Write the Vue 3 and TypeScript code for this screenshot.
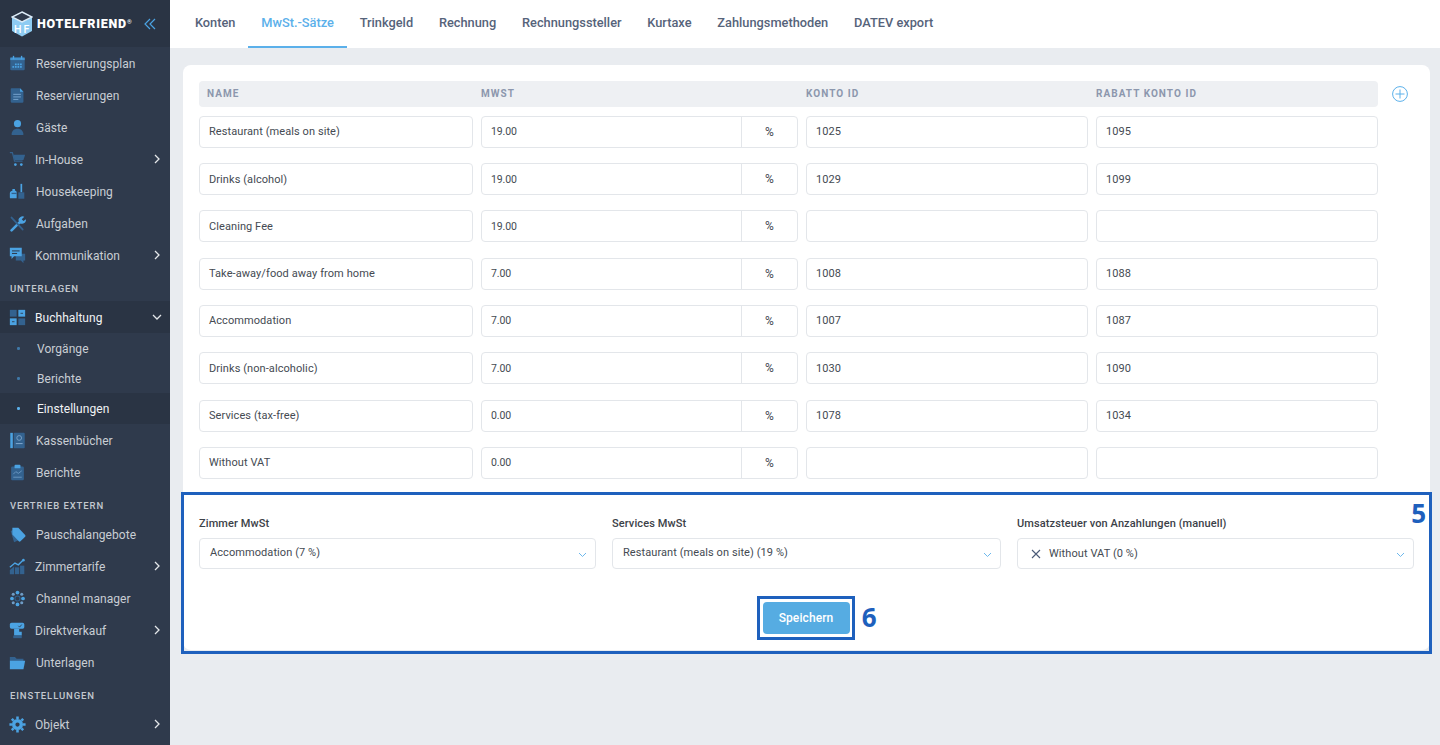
<script setup lang="ts">
interface NavEntry {
  kind: 'item' | 'label' | 'sub'
  text: string
  icon?: string
  arrow?: boolean
  open?: boolean
  active?: boolean
}

const L = '#4ba3e3'
const D = '#33628f'

const icons: Record<string, string> = {
  calendar: `<rect x="1.5" y="3" width="17" height="15" rx="1.5" fill="${D}"/><rect x="1.5" y="3" width="17" height="3" fill="${L}" opacity=".75"/><rect x="4.5" y="1" width="1.6" height="4" fill="${L}"/><rect x="14" y="1" width="1.6" height="4" fill="${L}"/><g fill="${L}"><rect x="4" y="13" width="2" height="2"/><rect x="7" y="13" width="2" height="2"/><rect x="10" y="10" width="2" height="2"/><rect x="13" y="10" width="2" height="2"/><rect x="10" y="13" width="2" height="2"/><rect x="13" y="13" width="2" height="2"/><rect x="7" y="10" width="2" height="2"/></g>`,
  doc: `<path d="M3 1.5h10l4 4V17a1.5 1.5 0 0 1-1.5 1.5h-12A1.5 1.5 0 0 1 2 17V2.5a1 1 0 0 1 1-1z" fill="${D}"/><path d="M13 1.5l4 4h-4z" fill="${L}"/><g fill="#6f9cc6"><rect x="5" y="8" width="9" height="1.3"/><rect x="5" y="11" width="9" height="1.3"/><rect x="5" y="14" width="6" height="1.3"/></g>`,
  person: `<circle cx="10" cy="5.5" r="4.2" fill="${L}"/><path d="M3 18.5c0-4.5 3-7 7-7s7 2.5 7 7c0 .5-14 .5-14 0z" fill="${D}"/>`,
  cart: `<path d="M1 2h3l2.5 10h9.500" fill="none" stroke="${D}" stroke-width="1.4"/><path d="M5 4.5h14l-2 6H6.5z" fill="${D}"/><circle cx="7.5" cy="16" r="1.6" fill="${L}"/><circle cx="14.5" cy="16" r="1.6" fill="${L}"/>`,
  broom: `<path d="M1 12c0-1.500 1.500-3 3-3V7h3v2c1 0 2 .5 2 2v7H2a1 1 0 0 1-1-1z" fill="${L}"/><rect x="3" y="11.500" width="6" height="1.500" fill="${D}"/><rect x="13.500" y="1" width="2" height="10" fill="${L}"/><path d="M11 11h7v7.500h-7z" fill="${D}"/>`,
  tools: `<path d="M3 18l10-10" stroke="${L}" stroke-width="3" stroke-linecap="round"/><path d="M11 6a5 5 0 0 1 7-4l-3 3 2 2 3-2a5 5 0 0 1-7 5z" fill="${L}"/><path d="M3 3l13 14" stroke="${D}" stroke-width="2.2" stroke-linecap="round"/>`,
  chat: `<path d="M8 8h11v8h-2v3l-3-3H8z" fill="${D}"/><path d="M1 1h14v10H6l-3 3v-3H1z" fill="${L}"/><g fill="#2f3a4c"><rect x="3.5" y="4" width="9" height="1.2"/><rect x="3.5" y="7" width="6" height="1.2"/></g>`,
  calc: `<rect x="1" y="1" width="8" height="8" fill="${D}"/><rect x="11" y="1" width="8" height="8" fill="${L}"/><rect x="1" y="11" width="8" height="8" fill="${L}"/><rect x="11" y="11" width="8" height="8" fill="${D}"/><g fill="#2f3a4c"><rect x="13.500" y="4.500" width="3" height="1"/><rect x="3.500" y="14.500" width="3" height="1"/></g>`,
  book: `<rect x="1.5" y="1" width="3" height="18" fill="${L}"/><rect x="5.5" y="1" width="13" height="18" rx="1" fill="${D}"/><circle cx="12" cy="7" r="2.8" fill="none" stroke="#7fa6cc" stroke-width="1"/><rect x="8" y="13" width="8" height="1.2" fill="#7fa6cc"/>`,
  clipboard: `<rect x="2.5" y="3" width="15" height="16" rx="1.5" fill="${D}"/><rect x="6.5" y="1" width="7" height="4" rx="1" fill="${L}"/><path d="M5 12l3-3 3 2 4-3" fill="none" stroke="#6f9cc6" stroke-width="1"/><rect x="5" y="15" width="10" height="1" fill="#6f9cc6"/>`,
  tag: `<path d="M2 6l6-3 5 13-7 3z" fill="${D}"/><path d="M4 2h7l8 8.500a1.500 1.500 0 0 1 0 2L13.500 18a1.500 1.500 0 0 1-2 0L4 10z" fill="${L}"/>`,
  chart: `<path d="M1 11l6-5 4 2 6-6" fill="none" stroke="${L}" stroke-width="1.6"/><circle cx="17" cy="2.5" r="1.5" fill="${L}"/><g fill="${D}"><path d="M1 14l5-4v9H1z"/><rect x="7" y="11" width="5" height="8"/><rect x="13" y="9" width="5" height="10"/></g>`,
  channel: `<g fill="${L}"><circle cx="10" cy="3" r="2.2"/><circle cx="3.5" cy="10" r="2.2"/><circle cx="16.5" cy="10" r="2.2"/><circle cx="10" cy="17" r="2.2"/></g><g fill="#6f9cc6"><circle cx="5" cy="5" r="1.8"/><circle cx="15" cy="5" r="1.8"/><circle cx="5" cy="15" r="1.8"/><circle cx="15" cy="15" r="1.8"/></g><circle cx="10" cy="10" r="3" fill="none" stroke="${D}" stroke-width="1.2"/>`,
  sale: `<path d="M1 3a2 2 0 0 1 2-2h13a2 2 0 0 1 2 2v3a2 2 0 0 1-2 2H3a2 2 0 0 1-2-2z" fill="${L}"/><path d="M6 8h6v3.500h3V16H6z" fill="${L}"/><rect x="5" y="16" width="10" height="3" fill="${D}"/><path d="M11 4.500l1.500 1.500 2.500-3" fill="none" stroke="#2f3a4c" stroke-width="1"/>`,
  folder: `<path d="M1 3.500h6l2 2h8v3H1z" fill="${D}"/><path d="M1 18V8h18l-2 10z" fill="${L}"/>`,
  gear: `<path d="M10 5.500a4.500 4.500 0 1 0 0 9 4.500 4.500 0 0 0 0-9z" fill="none" stroke="${L}" stroke-width="4"/><g stroke="${L}" stroke-width="3"><path d="M10 .5v3M10 16.500v3M.5 10h3M16.500 10h3M3.300 3.300l2.100 2.100M14.600 14.600l2.100 2.100M3.300 16.700l2.100-2.100M14.600 5.400l2.100-2.100"/></g>`,
}

const nav: NavEntry[] = [
  { kind: 'item', text: 'Reservierungsplan', icon: 'calendar' },
  { kind: 'item', text: 'Reservierungen', icon: 'doc' },
  { kind: 'item', text: 'Gäste', icon: 'person' },
  { kind: 'item', text: 'In-House', icon: 'cart', arrow: true },
  { kind: 'item', text: 'Housekeeping', icon: 'broom' },
  { kind: 'item', text: 'Aufgaben', icon: 'tools' },
  { kind: 'item', text: 'Kommunikation', icon: 'chat', arrow: true },
  { kind: 'label', text: 'Unterlagen' },
  { kind: 'item', text: 'Buchhaltung', icon: 'calc', arrow: true, open: true },
  { kind: 'sub', text: 'Vorgänge' },
  { kind: 'sub', text: 'Berichte' },
  { kind: 'sub', text: 'Einstellungen', active: true },
  { kind: 'item', text: 'Kassenbücher', icon: 'book' },
  { kind: 'item', text: 'Berichte', icon: 'clipboard' },
  { kind: 'label', text: 'Vertrieb extern' },
  { kind: 'item', text: 'Pauschalangebote', icon: 'tag' },
  { kind: 'item', text: 'Zimmertarife', icon: 'chart', arrow: true },
  { kind: 'item', text: 'Channel manager', icon: 'channel' },
  { kind: 'item', text: 'Direktverkauf', icon: 'sale', arrow: true },
  { kind: 'item', text: 'Unterlagen', icon: 'folder' },
  { kind: 'label', text: 'Einstellungen' },
  { kind: 'item', text: 'Objekt', icon: 'gear', arrow: true },
]

const tabs = ['Konten', 'MwSt.-Sätze', 'Trinkgeld', 'Rechnung', 'Rechnungssteller', 'Kurtaxe', 'Zahlungsmethoden', 'DATEV export']

const rates = [
  { name: 'Restaurant (meals on site)', rate: '19.00', account: '1025', discount: '1095' },
  { name: 'Drinks (alcohol)', rate: '19.00', account: '1029', discount: '1099' },
  { name: 'Cleaning Fee', rate: '19.00', account: '', discount: '' },
  { name: 'Take-away/food away from home', rate: '7.00', account: '1008', discount: '1088' },
  { name: 'Accommodation', rate: '7.00', account: '1007', discount: '1087' },
  { name: 'Drinks (non-alcoholic)', rate: '7.00', account: '1030', discount: '1090' },
  { name: 'Services (tax-free)', rate: '0.00', account: '1078', discount: '1034' },
  { name: 'Without VAT', rate: '0.00', account: '', discount: '' },
]

const selects = [
  { label: 'Zimmer MwSt', value: 'Accommodation (7 %)', clearable: false },
  { label: 'Services MwSt', value: 'Restaurant (meals on site) (19 %)', clearable: false },
  { label: 'Umsatzsteuer von Anzahlungen (manuell)', value: 'Without VAT (0 %)', clearable: true },
]
</script>

<template>
  <div class="app">
    <aside class="sidebar">
      <div class="brand">
        <svg class="brand__logo" width="22" height="26" viewBox="0 0 22 26">
          <path d="M11 1l10 5v14l-10 5.500L1 20V6z" fill="#8ecbf2" />
          <path d="M11 1l10 5-10 5L1 6z" fill="#2f3a4c" stroke="#dcebf7" stroke-width="1.5" />
          <text x="3" y="21.500" font-size="10.500" font-weight="500" fill="#fff" font-family="Roboto, sans-serif">H</text>
          <text x="12.500" y="21.500" font-size="10.500" font-weight="500" fill="#fff" font-family="Roboto, sans-serif">F</text>
        </svg>
        <span class="brand__name">HOTELFRIEND<sup>®</sup></span>
        <svg class="brand__fold" width="12" height="12" viewBox="0 0 12 12" fill="none" stroke="#4ba3e3" stroke-width="1.2">
          <path d="M6 1L1 6l5 5M11 1L6 6l5 5" />
        </svg>
      </div>
      <nav class="nav">
        <template v-for="entry in nav" :key="entry.kind + entry.text">
          <div v-if="entry.kind === 'label'" class="nav__label">{{ entry.text }}</div>
          <div v-else-if="entry.kind === 'sub'" class="nav__sub" :class="{ 'nav__sub--active': entry.active }">
            <i class="nav__dot" />
            <span>{{ entry.text }}</span>
          </div>
          <div
            v-else
            class="nav__item"
            :class="{ 'nav__item--open': entry.open, 'nav__item--arrow': entry.arrow }"
          >
            <svg class="nav__icon" width="17" height="17" viewBox="0 0 20 20" v-html="icons[entry.icon ?? '']" />
            <span class="nav__text">{{ entry.text }}</span>
            <svg v-if="entry.arrow" class="nav__arrow" width="10" height="10" viewBox="0 0 10 10" fill="none" stroke="#e4e7ea" stroke-width="1.3">
              <path :d="entry.open ? 'M1 3l4 4 4-4' : 'M3 1l4 4-4 4'" />
            </svg>
          </div>
        </template>
      </nav>
    </aside>

    <main class="main">
      <header class="tabs">
        <a v-for="tab in tabs" :key="tab" class="tabs__tab" :class="{ 'tabs__tab--active': tab === 'MwSt.-Sätze' }">{{ tab }}</a>
      </header>

      <section class="card">
        <div class="rates">
          <div class="rates__body">
            <div class="rates__head">
              <span>Name</span>
              <span>MwSt</span>
              <span>Konto ID</span>
              <span>Rabatt Konto ID</span>
            </div>
            <div class="rates__rows">
              <div v-for="row in rates" :key="row.name" class="rates__row">
                <div class="field">{{ row.name }}</div>
                <div class="field field--rate">
                  <span class="field__value">{{ row.rate }}</span>
                  <span class="field__unit">%</span>
                </div>
                <div class="field">{{ row.account }}</div>
                <div class="field">{{ row.discount }}</div>
              </div>
            </div>
          </div>
          <svg class="rates__add" width="16" height="16" viewBox="0 0 16 16" fill="none" stroke="#5bb0ea" stroke-width="1">
            <circle cx="8" cy="8" r="7.4" />
            <path d="M8 3.500v9M3.500 8h9" />
          </svg>
        </div>

        <div class="defaults">
          <div class="defaults__grid">
            <div v-for="select in selects" :key="select.label" class="select">
              <label class="select__label">{{ select.label }}</label>
              <div class="select__box" :class="{ 'select__box--clearable': select.clearable }">
                <svg v-if="select.clearable" class="select__clear" width="10" height="10" viewBox="0 0 10 10" fill="none" stroke="#4c5b78" stroke-width="1.1">
                  <path d="M1 1l8 8M9 1l-8 8" />
                </svg>
                <span>{{ select.value }}</span>
                <svg class="select__caret" width="9" height="6" viewBox="0 0 9 6" fill="none" stroke="#6db8ec" stroke-width="1">
                  <path d="M1 1l3.500 3.500L8 1" />
                </svg>
              </div>
            </div>
          </div>
          <div class="defaults__actions">
            <div class="save">
              <button class="save__button" type="button">Speichern</button>
              <i class="save__mark" />
              <b class="callout callout--six">6</b>
            </div>
          </div>
          <i class="defaults__mark" />
          <b class="callout callout--five">5</b>
        </div>
      </section>
    </main>
  </div>
</template>

<style>
html,
body {
  margin: 0;
  background: #e9ecf0;
}
</style>

<style scoped>
.app {
  display: flex;
  height: 745px;
  overflow: hidden;
  font-family: Roboto, "Liberation Sans", sans-serif;
  font-size: 12px;
  color: #444a52;
}

.sidebar {
  flex: 0 0 170px;
  background: #2f3a4c;
  color: #c9ced4;
}

.brand {
  display: flex;
  align-items: center;
  height: 47px;
  padding-left: 11px;
  box-sizing: border-box;
  background: #2a3444;
}

.brand__name {
  margin-left: 4px;
  font-size: 12.5px;
  font-weight: 900;
  letter-spacing: 0.8px;
  color: #fff;
}

.brand__name sup {
  font-size: 6px;
  font-weight: 400;
  vertical-align: 4px;
  line-height: 0;
}

.brand__fold {
  margin-left: 11px;
}

.nav__item {
  position: relative;
  display: flex;
  align-items: center;
  height: 32px;
  padding: 1px 0 0 9px;
  box-sizing: border-box;
  font-size: 12px;
  letter-spacing: 0.05px;
}

.nav__item--arrow .nav__text {
  margin-left: 9px;
}

.nav__text {
  margin-left: 10px;
}

.nav__icon {
  margin-top: -1px;
}

.nav__item--open {
  background: #2a3444;
  color: #f1f3f5;
}

.nav__arrow {
  position: absolute;
  right: 8px;
  top: 11px;
}

.nav__label {
  height: 30px;
  padding: 12px 0 0 10px;
  box-sizing: border-box;
  font-size: 9.5px;
  font-weight: 500;
  letter-spacing: 0.9px;
  text-transform: uppercase;
  color: #c3c8cf;
}

.nav__sub {
  display: flex;
  align-items: center;
  height: 30px;
  padding: 1px 0 0 17px;
  box-sizing: border-box;
  font-size: 12px;
  letter-spacing: 0.05px;
}

.nav__sub span {
  margin-left: 17.5px;
}

.nav__sub--active {
  height: 31px;
  padding-top: 0;
  background: #2a3444;
  color: #f1f3f5;
}

.nav__dot {
  width: 2.5px;
  height: 2.5px;
  border-radius: 50%;
  background: #3f78a8;
}

.nav__sub--active .nav__dot {
  background: #5bb0ea;
}

.main {
  flex: 1;
  min-width: 0;
  background: #e9ecf0;
}

.tabs {
  display: flex;
  height: 48px;
  padding-left: 12px;
  box-sizing: border-box;
  background: #fff;
}

.tabs__tab {
  display: flex;
  align-items: center;
  padding: 0 12.9px 1px;
  border-bottom: 2px solid transparent;
  font-size: 12.8px;
  font-weight: 500;
  color: #56637a;
}

.tabs__tab--active {
  border-bottom-color: #5bb0ea;
  color: #5bb0ea;
}

.card {
  margin: 17px 10px 0 13px;
  padding: 16px;
  border-radius: 8px;
  background: #fff;
}

.rates {
  display: flex;
  align-items: flex-start;
}

.rates__body {
  width: 1179px;
}

.rates__head,
.rates__row {
  display: grid;
  grid-template-columns: 274px 317px 282px 282px;
  column-gap: 8px;
}

.rates__head {
  align-items: center;
  height: 26px;
  padding-bottom: 1px;
  box-sizing: border-box;
  border-radius: 4px;
  background: #eef0f3;
  font-size: 10px;
  font-weight: 700;
  letter-spacing: 1.05px;
  text-transform: uppercase;
  color: #8c97ad;
}

.rates__head span:first-child {
  padding-left: 8px;
}

.rates__rows {
  display: flex;
  flex-direction: column;
  gap: 15.3px;
  margin-top: 8.8px;
}

.rates__add {
  margin: 5px 0 0 14px;
}

.field {
  display: flex;
  align-items: center;
  height: 32px;
  padding-left: 9px;
  box-sizing: border-box;
  border: 1px solid #e3e6ea;
  border-radius: 4px;
  background: #fff;
  font-size: 11px;
  letter-spacing: 0.08px;
  white-space: nowrap;
}

.field--rate {
  padding-left: 0;
}

.field__value {
  flex: 1;
  padding-left: 9px;
  font-size: 10.5px;
  letter-spacing: -0.1px;
}

.field__unit {
  display: flex;
  align-items: center;
  justify-content: center;
  align-self: stretch;
  width: 55px;
  border-left: 1px solid #e3e6ea;
  font-size: 12px;
}

.defaults {
  position: relative;
  margin-top: 37.2px;
}

.defaults__grid {
  display: grid;
  grid-template-columns: 397px 389px 397px;
  column-gap: 16px;
  width: 1215px;
}

.select__label {
  display: block;
  height: 14px;
  margin-bottom: 8px;
  font-size: 11px;
  font-weight: 500;
  line-height: 16px;
  letter-spacing: 0.1px;
  color: #3c4148;
}

.select__box {
  position: relative;
  display: flex;
  align-items: center;
  height: 31px;
  padding: 0 0 2px 10px;
  box-sizing: border-box;
  border: 1px solid #e3e6ea;
  border-radius: 4px;
  font-size: 11px;
  letter-spacing: 0.08px;
}

.select__box--clearable {
  padding-bottom: 0;
}

.select__clear {
  margin: 0 8px 0 3px;
}

.select__caret {
  position: absolute;
  right: 8px;
  top: 13px;
}

.defaults__actions {
  display: flex;
  justify-content: center;
  margin: 33px 0 0 -1px;
}

.save {
  position: relative;
}

.save__button {
  display: block;
  width: 87px;
  height: 32px;
  border: 0;
  border-radius: 4px;
  background: #56ace2;
  font: 500 12px Roboto, sans-serif;
  letter-spacing: 0.1px;
  color: #fff;
}

.save__mark {
  position: absolute;
  inset: -6px -5px -6px -6px;
  border: 3px solid #1e60bd;
  pointer-events: none;
}

.defaults__mark {
  position: absolute;
  left: -18px;
  right: -18px;
  top: -24px;
  bottom: -20px;
  border: 3px solid #1e60bd;
  pointer-events: none;
}

.callout {
  position: absolute;
  font-family: "Open Sans", sans-serif;
  font-size: 26px;
  font-weight: 700;
  line-height: 26px;
  color: #1e60bd;
  text-shadow: 1px 1px 0 #fff, -1px -1px 0 #fff, 1px -1px 0 #fff, -1px 1px 0 #fff;
}

.callout--five {
  top: -16px;
  right: -12px;
}

.callout--six {
  top: 2px;
  right: -27px;
}
</style>
